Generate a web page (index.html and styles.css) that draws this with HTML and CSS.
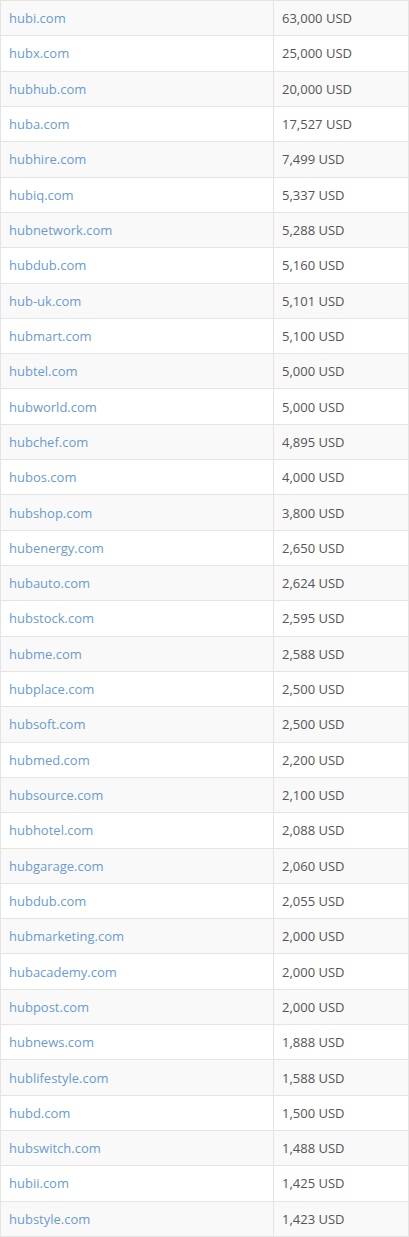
FILE: index.html
```html
<!DOCTYPE html>
<html>
<head>
<meta charset="utf-8">
<link rel="stylesheet" href="styles.css">
</head>
<body>
<table class="domains">
<tbody>
<tr><td class="name"><a href="#">hubi.com</a></td><td class="price">63,000 USD</td></tr>
<tr><td class="name"><a href="#">hubx.com</a></td><td class="price">25,000 USD</td></tr>
<tr><td class="name"><a href="#">hubhub.com</a></td><td class="price">20,000 USD</td></tr>
<tr><td class="name"><a href="#">huba.com</a></td><td class="price">17,527 USD</td></tr>
<tr><td class="name"><a href="#">hubhire.com</a></td><td class="price">7,499 USD</td></tr>
<tr><td class="name"><a href="#">hubiq.com</a></td><td class="price">5,337 USD</td></tr>
<tr><td class="name"><a href="#">hubnetwork.com</a></td><td class="price">5,288 USD</td></tr>
<tr><td class="name"><a href="#">hubdub.com</a></td><td class="price">5,160 USD</td></tr>
<tr><td class="name"><a href="#">hub-uk.com</a></td><td class="price">5,101 USD</td></tr>
<tr><td class="name"><a href="#">hubmart.com</a></td><td class="price">5,100 USD</td></tr>
<tr><td class="name"><a href="#">hubtel.com</a></td><td class="price">5,000 USD</td></tr>
<tr><td class="name"><a href="#">hubworld.com</a></td><td class="price">5,000 USD</td></tr>
<tr><td class="name"><a href="#">hubchef.com</a></td><td class="price">4,895 USD</td></tr>
<tr><td class="name"><a href="#">hubos.com</a></td><td class="price">4,000 USD</td></tr>
<tr><td class="name"><a href="#">hubshop.com</a></td><td class="price">3,800 USD</td></tr>
<tr><td class="name"><a href="#">hubenergy.com</a></td><td class="price">2,650 USD</td></tr>
<tr><td class="name"><a href="#">hubauto.com</a></td><td class="price">2,624 USD</td></tr>
<tr><td class="name"><a href="#">hubstock.com</a></td><td class="price">2,595 USD</td></tr>
<tr><td class="name"><a href="#">hubme.com</a></td><td class="price">2,588 USD</td></tr>
<tr><td class="name"><a href="#">hubplace.com</a></td><td class="price">2,500 USD</td></tr>
<tr><td class="name"><a href="#">hubsoft.com</a></td><td class="price">2,500 USD</td></tr>
<tr><td class="name"><a href="#">hubmed.com</a></td><td class="price">2,200 USD</td></tr>
<tr><td class="name"><a href="#">hubsource.com</a></td><td class="price">2,100 USD</td></tr>
<tr><td class="name"><a href="#">hubhotel.com</a></td><td class="price">2,088 USD</td></tr>
<tr><td class="name"><a href="#">hubgarage.com</a></td><td class="price">2,060 USD</td></tr>
<tr><td class="name"><a href="#">hubdub.com</a></td><td class="price">2,055 USD</td></tr>
<tr><td class="name"><a href="#">hubmarketing.com</a></td><td class="price">2,000 USD</td></tr>
<tr><td class="name"><a href="#">hubacademy.com</a></td><td class="price">2,000 USD</td></tr>
<tr><td class="name"><a href="#">hubpost.com</a></td><td class="price">2,000 USD</td></tr>
<tr><td class="name"><a href="#">hubnews.com</a></td><td class="price">1,888 USD</td></tr>
<tr><td class="name"><a href="#">hublifestyle.com</a></td><td class="price">1,588 USD</td></tr>
<tr><td class="name"><a href="#">hubd.com</a></td><td class="price">1,500 USD</td></tr>
<tr><td class="name"><a href="#">hubswitch.com</a></td><td class="price">1,488 USD</td></tr>
<tr><td class="name"><a href="#">hubii.com</a></td><td class="price">1,425 USD</td></tr>
<tr><td class="name"><a href="#">hubstyle.com</a></td><td class="price">1,423 USD</td></tr>
</tbody>
</table>
</body>
</html>
```

FILE: styles.css
```css
html, body {
  margin: 0;
  padding: 0;
  background: #fff;
}
body {
  font-family: "Open Sans", "Liberation Sans", sans-serif;
  font-size: 13px;
  color: #555;
}
.domains {
  width: 409px;
  border-collapse: collapse;
  border: 1px solid #e4e4e4;
}
.domains td {
  box-sizing: border-box;
  height: 35.32px;
  padding: 0 8px;
  line-height: 18px;
  vertical-align: middle;
  border: 1px solid #e4e4e4;
}
.domains tr:nth-child(odd) td {
  background: #f9f9f9;
}
.domains .name {
  width: 273px;
}
.domains a {
  color: #6b9ccc;
  text-decoration: none;
}
```
